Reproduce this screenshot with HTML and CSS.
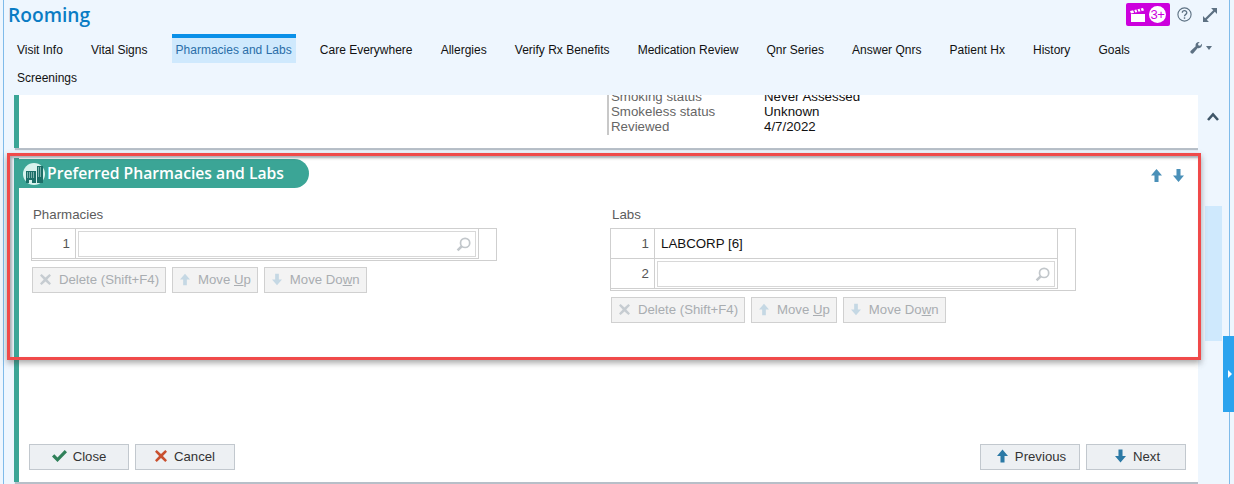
FILE: index.html
```html
<!DOCTYPE html>
<html lang="en">
<head>
    <meta charset="UTF-8">
    <title>Rooming</title>
    <link rel="stylesheet" href="styles.css">
</head>
<body>
    <svg class="defs" width="0" height="0">
        <symbol id="i-up" viewBox="0 0 12 14"><path d="M6 0 12 7H8.2V14H3.8V7H0Z"/></symbol>
        <symbol id="i-down" viewBox="0 0 12 14"><path d="M3.8 0H8.2V7H12L6 14 0 7H3.8Z"/></symbol>
        <symbol id="i-x" viewBox="0 0 14 14"><path d="M2 0 7 4.6 12 0 14 2 9.300 7 14 12 12 14 7 9.400 2 14 0 12 4.700 7 0 2Z"/></symbol>
        <symbol id="i-search" viewBox="0 0 14 14"><circle cx="8.500" cy="5.500" r="4.300" fill="none" stroke="currentColor" stroke-width="1.600"/><path d="M5.500 8.500 1.500 12.500" stroke="currentColor" stroke-width="2.400"/></symbol>
    </svg>

    <div class="window">
        <header class="title-row">
            <h1>Rooming</h1>
            <div class="title-tools">
                <div class="badge">
                    <svg width="16" height="14" viewBox="0 0 16 14"><path fill="#fff" d="M1 6H15V14H1ZM0 3 13 0 14 2.500 1 5.500Z"/><path stroke="#cc00dd" stroke-width="1.200" d="M3.500 1.500 4.800 5M6.800 1 8 4.300M10 .2 11.200 3.500"/></svg>
                    <span class="badge-num">3+</span>
                </div>
                <svg class="help" width="15" height="15" viewBox="0 0 15 15"><circle cx="7.500" cy="7.500" r="6.600" fill="none" stroke="#5d7183" stroke-width="1.100"/><path d="M5.300 5.800C5.300 3 9.800 3 9.800 5.700 9.800 7.500 7.500 7.300 7.500 9.300" fill="none" stroke="#5d7183" stroke-width="1.300"/><rect x="6.800" y="10.300" width="1.400" height="1.500" fill="#5d7183"/></svg>
                <svg class="expand" width="14" height="14" viewBox="0 0 13 13"><path fill="#5d7183" d="M7.500 0H13V5.500L11 3.500 3.500 11 5.500 13H0V7.500L2 9.500 9.500 2Z"/></svg>
            </div>
        </header>

        <nav class="nav">
            <div class="tabs">
                <a class="tab">Visit Info</a>
                <a class="tab">Vital Signs</a>
                <a class="tab active">Pharmacies and Labs</a>
                <a class="tab">Care Everywhere</a>
                <a class="tab">Allergies</a>
                <a class="tab">Verify Rx Benefits</a>
                <a class="tab">Medication Review</a>
                <a class="tab">Qnr Series</a>
                <a class="tab">Answer Qnrs</a>
                <a class="tab">Patient Hx</a>
                <a class="tab">History</a>
                <a class="tab">Goals</a>
                <a class="tab">Screenings</a>
            </div>
            <div class="nav-tool">
                <svg width="12" height="12" viewBox="0 0 12 12"><path fill="#5d7183" d="M12 2.800C12 5.300 9.700 6.700 7.700 5.900L3.300 11.300C2.200 12.600-.6 10.500.6 8.900L5.700 4.200C5 2 6.700-.2 9.700 0L7.900 2 8.600 3.500 10.200 3.800 11.800 1.700Z"/></svg>
                <span class="caret"></span>
            </div>
        </nav>

        <div class="main">
            <div class="scroll">
                <section class="panel panel-top">
                    <dl class="social">
                        <dt>Smoking status</dt><dd>Never Assessed</dd>
                        <dt>Smokeless status</dt><dd>Unknown</dd>
                        <dt>Reviewed</dt><dd>4/7/2022</dd>
                    </dl>
                </section>

                <section class="panel panel-form">
                    <div class="section-head">
                        <h2 class="pill">
                            <span class="pill-icon">
                                <svg width="17" height="17" viewBox="0 0 17 17"><path fill="#1c6f68" d="M0 5H10V17H6V14H3V17H0ZM11 0H17V17H11Z"/><path stroke="#d8f3ee" stroke-width="1" stroke-dasharray="1 1" d="M1 7H9M1 9H9M1 11H9M12 2H16M12 4H16M12 6H16M12 8H16M12 10H16"/></svg>
                            </span>
                            Preferred Pharmacies and Labs
                        </h2>
                        <div class="order-arrows">
                            <svg width="11" height="13"><use href="#i-up"/></svg>
                            <svg width="11" height="13"><use href="#i-down"/></svg>
                        </div>
                    </div>

                    <div class="columns">
                        <div class="col">
                            <div class="col-label">Pharmacies</div>
                            <div class="grid">
                                <div class="row">
                                    <div class="num">1</div>
                                    <div class="cell"><div class="input"><svg class="search" width="15" height="15"><use href="#i-search"/></svg></div></div>
                                </div>
                            </div>
                            <div class="grid-buttons">
                                <button class="btn-small"><svg class="x" width="11" height="11"><use href="#i-x"/></svg><span>Delete (Shift+F4)</span></button>
                                <button class="btn-small"><svg class="arr" width="10" height="13"><use href="#i-up"/></svg><span>Move <u>U</u>p</span></button>
                                <button class="btn-small"><svg class="arr" width="10" height="13"><use href="#i-down"/></svg><span>Move Do<u>w</u>n</span></button>
                            </div>
                        </div>
                        <div class="col">
                            <div class="col-label">Labs</div>
                            <div class="grid">
                                <div class="row">
                                    <div class="num">1</div>
                                    <div class="cell cell-text">LABCORP [6]</div>
                                </div>
                                <div class="row">
                                    <div class="num">2</div>
                                    <div class="cell"><div class="input"><svg class="search" width="15" height="15"><use href="#i-search"/></svg></div></div>
                                </div>
                            </div>
                            <div class="grid-buttons">
                                <button class="btn-small"><svg class="x" width="11" height="11"><use href="#i-x"/></svg><span>Delete (Shift+F4)</span></button>
                                <button class="btn-small"><svg class="arr" width="10" height="13"><use href="#i-up"/></svg><span>Move <u>U</u>p</span></button>
                                <button class="btn-small"><svg class="arr" width="10" height="13"><use href="#i-down"/></svg><span>Move Do<u>w</u>n</span></button>
                            </div>
                        </div>
                    </div>

                    <footer class="footer">
                        <div class="footer-group">
                            <button class="btn"><svg class="check" width="15" height="12" viewBox="0 0 15 12"><path d="M0 6.500 2.300 4.300 5.500 7.500 12.700 0 15 2.300 5.500 12Z"/></svg><span>Close</span></button>
                            <button class="btn"><svg class="cancel" width="12" height="12"><use href="#i-x"/></svg><span>Cancel</span></button>
                        </div>
                        <div class="footer-group">
                            <button class="btn btn-nav"><svg class="nav-arrow" width="11" height="14"><use href="#i-up"/></svg><span>Previous</span></button>
                            <button class="btn btn-nav"><svg class="nav-arrow" width="11" height="14"><use href="#i-down"/></svg><span>Next</span></button>
                        </div>
                    </footer>
                </section>
            </div>

            <aside class="rail">
                <svg class="chevron" width="12" height="9" viewBox="0 0 12 9"><path d="M1 8 6 2.500 11 8" fill="none" stroke="#3f5668" stroke-width="2.600"/></svg>
                <div class="rail-band"></div>
            </aside>
        </div>

        <div class="highlight"></div>
    </div>

    <div class="side-tab"><span></span></div>
</body>
</html>
```

FILE: styles.css
```css
* { margin: 0; padding: 0; box-sizing: border-box; }
html, body {
    height: 484px;
    overflow: hidden;
}
body {
    font-family: "Liberation Sans", Arial, sans-serif;
    font-size: 13.3px;
    color: #111;
    background: #eef6fe;
    position: relative;
}
.defs {
    position: absolute;
}
.window {
    position: relative;
    width: 1227px;
    height: 484px;
    margin-left: 3px;
    border-left: 1px solid #7fbbea;
    border-right: 1px solid #7fbbea;
    background: #eef6fe;
    display: flex;
    flex-direction: column;
}

/* title */
.title-row {
    height: 34px;
    padding: 3px 12px 0 4px;
    display: flex;
    justify-content: space-between;
    align-items: flex-start;
}
h1 {
    font-family: "Open Sans", sans-serif;
    font-size: 19.2px;
    font-weight: 600;
    line-height: 24px;
    color: #0a7cc4;
}
.title-tools {
    display: flex;
    align-items: center;
    height: 23px;
}
.badge {
    width: 44px;
    height: 23px;
    background: #cc00dd;
    border-radius: 2px;
    display: flex;
    align-items: center;
    padding-left: 4px;
    gap: 3px;
}
.badge-num {
    width: 17px;
    height: 17px;
    border-radius: 50%;
    background: #fff;
    color: #cc00dd;
    font-size: 13px;
    letter-spacing: -0.5px;
    line-height: 17px;
    text-align: center;
}
.help {
    margin-left: 7px;
}
.expand {
    margin-left: 11px;
}

/* tabs */
.nav {
    height: 61px;
    display: flex;
    padding-left: 9px;
}
.tabs {
    width: 1168px;
    display: flex;
    flex-wrap: wrap;
    align-content: flex-start;
    font-size: 12px;
}
.tab {
    height: 29px;
    margin-right: 20.15px;
    margin-bottom: -1px;
    padding: 4px 4px 0;
    border-top: 4px solid transparent;
    line-height: 17px;
    white-space: nowrap;
}
.tab.active {
    background: #cfe9fd;
    border-top-color: #0a90e8;
    color: #2a6ea8;
}
.nav-tool {
    display: flex;
    align-items: center;
    gap: 4px;
    height: 25px;
    margin-left: 9px;
    margin-top: 1px;
}
.caret {
    width: 0;
    height: 0;
    border: 3.5px solid transparent;
    border-top: 4px solid #5d7183;
    border-bottom: 0;
}

/* main area */
.main {
    flex: 1;
    display: flex;
    min-height: 0;
    padding-left: 10px;
}
.scroll {
    width: 1184px;
    overflow: hidden;
    display: flex;
    flex-direction: column;
}
.panel {
    background: #fff;
    border-left: 5px solid #3ba596;
    box-shadow: 1px 2px 1px rgba(80, 90, 100, 0.35);
}
.panel-top {
    height: 53px;
    overflow: hidden;
    flex-shrink: 0;
    margin-bottom: 10px;
}
.social {
    margin: -6px 0 0 588px;
    padding: 0 0 1px 2px;
    border-left: 2px solid #c8c8c8;
    display: grid;
    grid-template-columns: 153px 1fr;
    line-height: 15px;
}
.social dt {
    color: #666;
}
.panel-form {
    height: 324px;
    display: flex;
    flex-direction: column;
}

/* section heading */
.section-head {
    display: flex;
    justify-content: space-between;
    margin-top: 1px;
    margin-left: -5px;
}
.pill {
    width: 295px;
    height: 29px;
    background: #3ba596;
    border-radius: 6px 15px 15px 0;
    color: #fff;
    font-family: "Open Sans", sans-serif;
    font-size: 15.7px;
    font-weight: 600;
    line-height: 26px;
    display: flex;
    align-items: flex-start;
    padding: 1px 0 0 9px;
    gap: 2px;
}
.pill-icon {
    width: 22px;
    height: 22px;
    margin-top: 3px;
    border-radius: 50%;
    background: #d8f3ee;
    display: flex;
    align-items: center;
    justify-content: center;
}
.order-arrows {
    display: flex;
    gap: 11px;
    margin: 10px 14px 0 0;
    fill: #4a90b8;
}

/* pharmacies and labs */
.columns {
    display: flex;
    padding: 19px 0 0 12px;
}
.col {
    width: 579px;
}
.col-label {
    padding-left: 2px;
    line-height: 15px;
    color: #5c5c5c;
    margin-bottom: 6px;
}
.grid {
    width: 466px;
    border: 1px solid #cfcfcf;
    padding-right: 17px;
    padding-bottom: 1px;
}
.row {
    height: 30px;
    display: flex;
    border-bottom: 1px solid #cfcfcf;
}
.num {
    width: 44px;
    border-right: 1px solid #cfcfcf;
    text-align: right;
    padding-right: 5px;
    line-height: 29px;
    color: #555;
}
.cell {
    flex: 1;
    padding: 2px;
    border-right: 1px solid #cfcfcf;
}
.cell-text {
    padding: 0 0 0 6px;
    line-height: 29px;
    color: #111;
}
.input {
    height: 26px;
    border: 1px solid #d8d8d8;
    display: flex;
    align-items: center;
    justify-content: flex-end;
    padding-right: 4px;
}
.search {
    color: #c2c7cb;
}
.grid-buttons {
    display: flex;
    gap: 6px;
    margin: 6px 0 0 1px;
}
button {
    font: inherit;
    display: flex;
    align-items: center;
    justify-content: center;
    background: #edf0f3;
    border: 1px solid #c2c8ce;
}
.btn-small {
    height: 26px;
    padding: 0 6px 2px 7px;
    font-size: 13.2px;
    color: #a9adb1;
    background: #f3f3f3;
    border-color: #d0d0d0;
    gap: 8px;
}
.x {
    fill: #c6ccd1;
}
.arr {
    fill: #c5d8e4;
}

/* footer buttons */
.footer {
    margin-top: auto;
    display: flex;
    justify-content: space-between;
    padding: 0 12px 12px 10px;
}
.footer-group {
    display: flex;
    gap: 6px;
}
.btn {
    width: 100px;
    height: 26px;
    padding-bottom: 2px;
    gap: 7px;
    color: #333;
    font-size: 13.2px;
}
.btn-nav {
    padding-left: 3px;
}
.check {
    fill: #2f8059;
    margin-right: -1px;
}
.cancel {
    fill: #c9502f;
}
.nav-arrow {
    fill: #2b79a5;
}

/* right rail */
.rail {
    flex: 1;
    display: flex;
    flex-direction: column;
    padding-left: 7px;
}
.chevron {
    margin: 17px 0 0 2px;
}
.rail-band {
    width: 17px;
    height: 135px;
    margin-top: 85px;
    background: #cfe9fd;
}

/* red annotation box drawn over the screenshot */
.highlight {
    position: absolute;
    left: 3px;
    top: 153px;
    width: 1194px;
    height: 207px;
    border: 3px solid #f04a4a;
    box-shadow: 0 3px 6px rgba(60, 60, 60, 0.45), inset 2px 2px 3px rgba(60, 60, 60, 0.4);
    pointer-events: none;
}
.side-tab {
    position: absolute;
    right: 0;
    top: 336px;
    width: 11px;
    height: 76px;
    background: #2ba3ee;
    display: flex;
    align-items: center;
    padding-left: 5px;
}
.side-tab span {
    width: 0;
    height: 0;
    border: 4px solid transparent;
    border-left: 4px solid #fff;
    border-right: 0;
}
```
